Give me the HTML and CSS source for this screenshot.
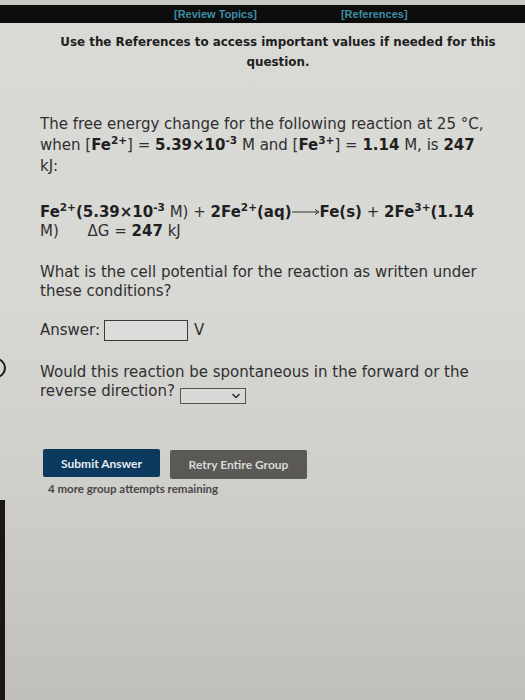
FILE: index.html
```html
<!DOCTYPE html>
<html>
<head>
<meta charset="utf-8">
<link rel="stylesheet" href="styles.css">
</head>
<body>
<div class="page">
  <div class="topstrip"></div>
  <div class="navbar">
    <a class="navlink">[Review Topics]</a>
    <a class="navlink">[References]</a>
  </div>
  <p class="notice">Use the References to access important values if needed for this question.</p>

  <div class="question">
    <p class="intro">The free energy change for the following reaction at 25 °C, when [<b>Fe<sup>2+</sup></b>] = <b>5.39×10<sup>-3</sup></b> M and [<b>Fe<sup>3+</sup></b>] = <b>1.14</b> M, is <b>247</b> kJ:</p>

    <p class="equation"><b>Fe<sup>2+</sup>(5.39×10<sup>-3</sup></b> M) + <b>2Fe<sup>2+</sup>(aq)</b><span class="arrow"><svg width="28" height="8" viewBox="0 0 28 8"><path d="M0 4 H26" stroke="#333" stroke-width="1"/><path d="M23 1.5 L27 4 L23 6.5" fill="none" stroke="#333" stroke-width="1"/></svg></span><b>Fe(s)</b> + <b>2Fe<sup>3+</sup>(1.14</b> M) <span class="dg">ΔG = <b>247</b> kJ</span></p>

    <p class="ask">What is the cell potential for the reaction as written under these conditions?</p>

    <div class="answer-row">
      <span>Answer:</span>
      <span class="input"></span>
      <span class="unit">V</span>
    </div>

    <p class="ask2">Would this reaction be spontaneous in the forward or the reverse direction? <span class="select"><svg width="10" height="6" viewBox="0 0 10 6"><path d="M1.5 1.2 L5 4.5 L8.5 1.2" fill="none" stroke="#333" stroke-width="1.6"/></svg></span></p>
  </div>

  <div class="actions">
    <div class="buttons">
      <span class="btn submit">Submit Answer</span>
      <span class="btn retry">Retry Entire Group</span>
    </div>
    <div class="remaining">4 more group attempts remaining</div>
  </div>
  <div class="edge-circle"></div>
  <div class="left-edge"></div>
</div>
</body>
</html>
```

FILE: styles.css
```css
html, body {
  margin: 0;
  padding: 0;
}
body {
  width: 525px;
  height: 700px;
  overflow: hidden;
  background: linear-gradient(180deg, #d9d9d6 0%, #d8d8d5 40%, #cfcecb 70%, #c1bfbb 100%);
  font-family: "DejaVu Sans", Verdana, sans-serif;
  color: #2a2a2a;
}
.page {
  position: relative;
  height: 700px;
}
.topstrip {
  height: 5px;
  background: #c9c9c6;
}
.navbar {
  height: 18px;
  background: #0d0d0d;
  display: flex;
  align-items: center;
  padding-left: 174px;
  gap: 84px;
}
.navlink {
  font-family: "Liberation Sans", Arial, sans-serif;
  font-weight: bold;
  font-size: 11px;
  color: #3d8ea6;
}
.notice {
  margin: 9px 0 0 56px;
  width: 444px;
  text-align: center;
  font-weight: bold;
  font-size: 11.9px;
  line-height: 20px;
  color: #1e1e1e;
}
.question {
  padding-left: 40px;
  width: 452px;
  font-size: 15px;
  color: #2f2f2f;
}
.question p {
  margin: 0;
}
.question b {
  color: #1f1f1f;
}
sup {
  font-size: 10.5px;
  line-height: 1;
  vertical-align: 6px;
}
.intro {
  padding-top: 42px;
  line-height: 21px;
}
.equation {
  padding-top: 25px;
  line-height: 19px;
}
.arrow {
  display: inline-block;
  vertical-align: 1px;
}
.arrow svg {
  display: block;
}
.dg {
  margin-left: 24px;
}
.ask {
  padding-top: 22px;
  line-height: 19px;
}
.answer-row {
  display: flex;
  align-items: center;
  margin-top: 17px;
  height: 24px;
}
.input {
  width: 82px;
  height: 19px;
  border: 1.5px solid #3a3a3a;
  background: #dcdcda;
  margin-left: 4px;
  box-sizing: content-box;
}
.unit {
  margin-left: 6px;
}
.ask2 {
  padding-top: 21px;
  line-height: 19px;
}
.select {
  display: inline-flex;
  align-items: center;
  justify-content: flex-end;
  height: 16px;
  width: 66px;
  border: 1px solid #555;
  padding-right: 4px;
  box-sizing: border-box;
  vertical-align: -3px;
  background: #d8d8d6;
}
.actions {
  margin-top: 45px;
  padding-left: 43px;
}
.buttons {
  display: flex;
  gap: 10px;
  align-items: flex-start;
}
.btn {
  display: flex;
  align-items: center;
  justify-content: center;
  height: 28px;
  border-radius: 2px;
  font-family: Lato, "Liberation Sans", sans-serif;
  font-weight: bold;
  font-size: 12px;
  color: #e6ecf0;
}
.submit {
  width: 117px;
  background: #0b3a5e;
}
.retry {
  width: 137px;
  height: 29px;
  margin-top: 1px;
  background: #5b5956;
  color: #d8d8d8;
}
.remaining {
  margin: 3px 0 0 5px;
  font-family: Lato, "Liberation Sans", sans-serif;
  font-weight: bold;
  font-size: 11.5px;
  color: #474747;
}
.edge-circle {
  position: absolute;
  left: -14px;
  top: 358px;
  width: 16px;
  height: 16px;
  border: 2px solid #1a1a1a;
  border-radius: 50%;
}
.left-edge {
  position: absolute;
  left: 0;
  top: 500px;
  width: 5px;
  height: 200px;
  background: #1a1715;
}
```
